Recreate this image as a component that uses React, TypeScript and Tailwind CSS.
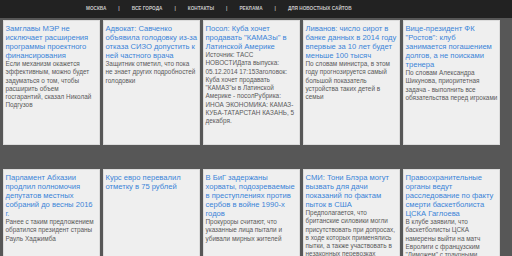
const nav = ["Москва", "Все города", "Контакты", "Реклама", "Для новостных сайтов"];

const news = [
  {
    title: "Замглавы МЭР не исключает расширения программы проектного финансирования",
    text: "Если механизм окажется эффективным, можно будет задуматься о том, чтобы расширить объем госгарантий, сказал Николай Подгузов",
  },
  {
    title: "Адвокат: Савченко объявила голодовку из-за отказа СИЗО допустить к ней частного врача",
    text: "Защитник отметил, что пока не знает других подробностей голодовки",
  },
  {
    title: "Посол: Куба хочет продавать \"КАМАЗы\" в Латинской Америке",
    text: "Источник: ТАСС НОВОСТИДата выпуска: 05.12.2014 17:15Заголовок: Куба хочет продавать \"КАМАЗ\"ы в Латинской Америке - посолРубрика: ИНОА ЭКОНОМИКА: КАМАЗ-КУБА-ТАТАРСТАН КАЗАНЬ, 5 декабря.",
  },
  {
    title: "Ливанов: число сирот в банке данных в 2014 году впервые за 10 лет будет меньше 100 тысяч",
    text: "По словам министра, в этом году прогнозируется самый большой показатель устройства таких детей в семьи",
  },
  {
    title: "Вице-президент ФК \"Ростов\": клуб занимается погашением долгов, а не поисками тренера",
    text: "По словам Александра Шикунова, приоритетная задача - выполнить все обязательства перед игроками",
  },
  {
    title: "Парламент Абхазии продлил полномочия депутатов местных собраний до весны 2016 г.",
    text: "Ранее с таким предложением обратился президент страны Рауль Хаджимба",
  },
  {
    title: "Курс евро перевалил отметку в 75 рублей",
    text: "",
  },
  {
    title: "В БиГ задержаны хорваты, подозреваемые в преступлениях против сербов в войне 1990-х годов",
    text: "Прокуроры считают, что указанные лица пытали и убивали мирных жителей",
  },
  {
    title: "СМИ: Тони Блэра могут вызвать для дачи показаний по фактам пыток в США",
    text: "Предполагается, что британские силовики могли присутствовать при допросах, в ходе которых применялись пытки, а также участвовать в незаконных перевозках",
  },
  {
    title: "Правоохранительные органы ведут расследование по факту смерти баскетболиста ЦСКА Гаглоева",
    text: "В клубе заявили, что баскетболисты ЦСКА намерены выйти на матч Евролиги с французским \"Лиможем\" с траурными повязками",
  },
];

export default function App() {
  return (
    <div className="w-[512px] h-[256px] overflow-hidden bg-[#575757] font-['Liberation_Sans',Arial,sans-serif]">
      {/* top menu */}
      <header className="h-[18px] bg-[#222222] flex items-center pl-[86px] gap-[12px]">
        {nav.map((item, i) => (
          <div key={item} className="flex items-center gap-[12px]">
            {i > 0 && <span className="text-[5px] font-bold text-[#bbbbbb]">|</span>}
            <span className="text-[4.7px] font-bold uppercase text-[#c8c8c8] leading-none whitespace-nowrap">
              {item}
            </span>
          </div>
        ))}
      </header>

      {/* news grid */}
      <main className="grid grid-cols-[repeat(5,97px)] gap-x-[3px] gap-y-[24px] pl-[3px] pt-[2px]">
        {news.map((n) => (
          <article
            key={n.title}
            className="h-[125px] bg-[#efefef] border border-[#dcdcdc] px-[1.5px] pt-[3px] overflow-hidden"
          >
            <a className="block text-[7.6px] leading-[9px] text-[#3a84d8]">{n.title}</a>
            {n.text && (
              <p className="text-[6.4px] leading-[8.3px] text-[#5a5a5a]">{n.text}</p>
            )}
          </article>
        ))}
      </main>
    </div>
  );
}
